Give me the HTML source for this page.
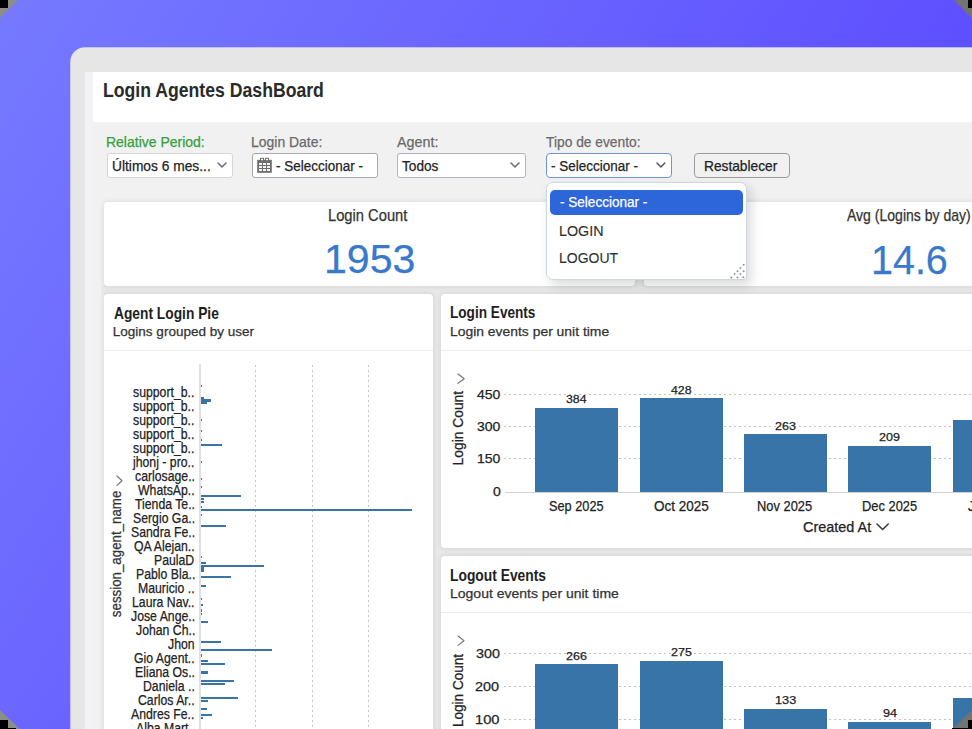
<!DOCTYPE html>
<html><head><meta charset="utf-8"><style>
html,body{margin:0;padding:0;width:972px;height:729px;overflow:hidden;background:#000}
body{position:relative;font-family:"Liberation Sans",sans-serif}
.b{position:absolute}
.t{position:absolute;line-height:1;white-space:nowrap;transform-origin:0 0;-webkit-text-stroke:0.25px currentColor}
#wrap{position:absolute;left:0;top:0;width:972px;height:729px;overflow:hidden}
</style></head><body><div id="wrap">
<div class="b" style="left:0;top:0;width:972px;height:729px;background:linear-gradient(122deg,rgb(118,122,255),rgb(84,61,255))"></div>
<div class="b" style="left:71px;top:48px;width:1029px;height:852px;background:#e6e6e6;border-radius:14px;box-shadow:0 0 0 0.8px rgba(240,240,255,0.85)"></div>
<div class="b" style="left:85px;top:72px;width:1015px;height:828px;background:#f2f2f4"></div>
<div class="b" style="left:93px;top:72px;width:1007px;height:50px;background:#ffffff"></div>
<div class="b" style="left:92.5px;top:122px;width:1.5px;height:778px;background:#f9f9fb"></div>
<div class="b" style="left:93px;top:122px;width:1007px;height:778px;background:#f1f1f1"></div>
<div class="t" style="left:102.82px;top:79px;font-size:20.35px;line-height:22px;color:#2a2a2a;transform:scaleX(0.8673);font-weight:bold;-webkit-text-stroke:0">Login Agentes DashBoard</div>
<div class="t" style="left:106.45px;top:133.7px;font-size:14.68px;line-height:16px;color:#34a03c;transform:scaleX(0.9526)">Relative Period:</div>
<div class="t" style="left:251.46px;top:133.7px;font-size:14.68px;line-height:16px;color:#6a6a6a;transform:scaleX(0.9511)">Login Date:</div>
<div class="t" style="left:397.37px;top:133.7px;font-size:14.68px;line-height:16px;color:#6a6a6a;transform:scaleX(0.9763)">Agent:</div>
<div class="t" style="left:545.9px;top:133.7px;font-size:14.68px;line-height:16px;color:#6a6a6a;transform:scaleX(0.9394)">Tipo de evento:</div>
<div class="b" style="left:107px;top:153px;width:125.5px;height:24.5px;background:#fff;border:1px solid #d6d6d6;border-radius:3px;box-sizing:border-box"></div>
<div class="b" style="left:252px;top:153px;width:126px;height:24.5px;background:#fff;border:1px solid #a8a8b0;border-radius:3px;box-sizing:border-box"></div>
<div class="b" style="left:397px;top:153px;width:128.5px;height:24.5px;background:#fff;border:1px solid #b4b4be;border-radius:3px;box-sizing:border-box"></div>
<div class="b" style="left:545.5px;top:152.8px;width:126.3px;height:25px;background:#fff;border:1.5px solid #7194dc;border-radius:4px;box-sizing:border-box"></div>
<div class="b" style="left:694px;top:153.3px;width:95.5px;height:24.5px;background:#f1f1f1;border:1px solid #9c9c9c;border-radius:4px;box-sizing:border-box"></div>
<div class="t" style="left:111.94px;top:157px;font-size:15.26px;line-height:17px;color:#222;transform:scaleX(0.9033)">Últimos 6 mes...</div>
<div class="t" style="left:276.4px;top:157px;font-size:15.26px;line-height:17px;color:#222;transform:scaleX(0.8862)">- Seleccionar -</div>
<div class="t" style="left:402.4px;top:157px;font-size:15.26px;line-height:17px;color:#222;transform:scaleX(0.8937)">Todos</div>
<div class="t" style="left:550.51px;top:157px;font-size:15.26px;line-height:17px;color:#222;transform:scaleX(0.8851)">- Seleccionar -</div>
<div class="t" style="left:703.87px;top:157.5px;font-size:14.53px;line-height:16px;color:#222;transform:scaleX(0.9459)">Restablecer</div>
<svg class="b" style="left:217.6px;top:163.3px;overflow:visible" width="8" height="4"><polyline points="0,0 4,4 8,0" fill="none" stroke="#6f6f6f" stroke-width="1.6" stroke-linecap="round" stroke-linejoin="round"/></svg>
<svg class="b" style="left:511px;top:163.3px;overflow:visible" width="8" height="4"><polyline points="0,0 4,4 8,0" fill="none" stroke="#6f6f6f" stroke-width="1.6" stroke-linecap="round" stroke-linejoin="round"/></svg>
<svg class="b" style="left:656.5px;top:163.3px;overflow:visible" width="7.8" height="4"><polyline points="0,0 3.9,4 7.8,0" fill="none" stroke="#5a5a5a" stroke-width="1.6" stroke-linecap="round" stroke-linejoin="round"/></svg>
<svg class="b" style="left:257px;top:157px" width="15" height="17" viewBox="0 0 15 17"><rect x="0.2" y="2.8" width="14.6" height="13" fill="#6d6d6d"/><rect x="3" y="0.8" width="4" height="3" fill="#6d6d6d"/><rect x="8" y="0.8" width="4" height="3" fill="#6d6d6d"/><rect x="4" y="1.8" width="2" height="1.4" fill="#fff"/><rect x="9" y="1.8" width="2" height="1.4" fill="#fff"/><rect x="2" y="6" width="3" height="2" fill="#f4f4f4"/><rect x="6" y="6" width="3" height="2" fill="#f4f4f4"/><rect x="10" y="6" width="3" height="2" fill="#f4f4f4"/><rect x="2" y="9" width="3" height="2" fill="#f4f4f4"/><rect x="6" y="9" width="3" height="2" fill="#f4f4f4"/><rect x="10" y="9" width="3" height="2" fill="#f4f4f4"/><rect x="2" y="12" width="3" height="2" fill="#f4f4f4"/><rect x="6" y="12" width="3" height="2" fill="#f4f4f4"/><rect x="10" y="12" width="3" height="2" fill="#f4f4f4"/></svg>
<div class="b" style="left:101px;top:285px;width:999px;height:10px;background:#e9e9e9"></div>
<div class="b" style="left:633px;top:201px;width:12px;height:86px;background:#e9e9e9"></div>
<div class="b" style="left:431px;top:293px;width:11px;height:607px;background:#e9e9e9"></div>
<div class="b" style="left:440px;top:547px;width:660px;height:10px;background:#e9e9e9"></div>
<div class="b" style="left:104px;top:202px;width:530.5px;height:84px;background:#fff;border-radius:4px;box-shadow:0 0 5px 1px rgba(0,0,0,0.085)"></div>
<div class="b" style="left:643.5px;top:202px;width:531.5px;height:84px;background:#fff;border-radius:4px;box-shadow:0 0 5px 1px rgba(0,0,0,0.085)"></div>
<div class="t" style="left:328.49px;top:206.9px;font-size:15.7px;line-height:17px;color:#333;transform:scaleX(0.9380)">Login Count</div>
<div class="t" style="left:323.68px;top:236.3px;font-size:40.54px;line-height:46px;color:#3979cb;transform:scaleX(1.0140)">1953</div>
<div class="t" style="left:847.37px;top:207px;font-size:15.7px;line-height:17px;color:#333;transform:scaleX(0.8942)">Avg (Logins by day)</div>
<div class="t" style="left:870.6px;top:236.5px;font-size:40.54px;line-height:46px;color:#3979cb;transform:scaleX(0.9739)">14.6</div>
<div class="b" style="left:104px;top:294px;width:328.5px;height:606px;background:#fff;border-radius:4px;box-shadow:0 0 5px 1px rgba(0,0,0,0.085)"></div>
<div class="b" style="left:441px;top:294px;width:659px;height:254px;background:#fff;border-radius:4px;box-shadow:0 0 5px 1px rgba(0,0,0,0.085)"></div>
<div class="b" style="left:441px;top:556px;width:659px;height:344px;background:#fff;border-radius:4px;box-shadow:0 0 5px 1px rgba(0,0,0,0.085)"></div>
<div class="b" style="left:104px;top:349.5px;width:328.5px;height:1px;background:#ececec"></div>
<div class="b" style="left:441px;top:349.5px;width:659px;height:1px;background:#ececec"></div>
<div class="b" style="left:441px;top:611.5px;width:659px;height:1px;background:#ececec"></div>
<div class="t" style="left:113.56px;top:304.9px;font-size:15.7px;line-height:17px;color:#1e1e1e;transform:scaleX(0.8781);font-weight:bold;-webkit-text-stroke:0">Agent Login Pie</div>
<div class="t" style="left:112.79px;top:323.9px;font-size:13.52px;line-height:15px;color:#333">Logins grouped by user</div>
<div class="t" style="left:450.09px;top:304.3px;font-size:15.7px;line-height:17px;color:#1e1e1e;transform:scaleX(0.8673);font-weight:bold;-webkit-text-stroke:0">Login Events</div>
<div class="t" style="left:449.86px;top:324px;font-size:13.52px;line-height:15px;color:#333;transform:scaleX(1.0282)">Login events per unit time</div>
<div class="t" style="left:449.87px;top:567px;font-size:15.7px;line-height:17px;color:#1e1e1e;transform:scaleX(0.8816);font-weight:bold;-webkit-text-stroke:0">Logout Events</div>
<div class="t" style="left:449.65px;top:586px;font-size:13.52px;line-height:15px;color:#333;transform:scaleX(1.0356)">Logout events per unit time</div>
<svg class="b" style="left:254px;top:365px" width="3" height="370"><line x1="1.5" y1="0" x2="1.5" y2="370" stroke="#c4c4c4" stroke-width="1" stroke-dasharray="2 3"/></svg>
<svg class="b" style="left:310.5px;top:365px" width="3" height="370"><line x1="1.5" y1="0" x2="1.5" y2="370" stroke="#c4c4c4" stroke-width="1" stroke-dasharray="2 3"/></svg>
<svg class="b" style="left:367px;top:365px" width="3" height="370"><line x1="1.5" y1="0" x2="1.5" y2="370" stroke="#c4c4c4" stroke-width="1" stroke-dasharray="2 3"/></svg>
<div class="b" style="left:199.4px;top:364.3px;width:1.4px;height:535.7px;background:#e0e0e0"></div>
<div class="t" style="left:133.47px;top:383.6px;font-size:13.95px;line-height:16px;color:#222;transform:scaleX(0.8800)">support_b..</div>
<div class="t" style="left:133.47px;top:397.6px;font-size:13.95px;line-height:16px;color:#222;transform:scaleX(0.8800)">support_b..</div>
<div class="t" style="left:133.47px;top:411.6px;font-size:13.95px;line-height:16px;color:#222;transform:scaleX(0.8800)">support_b..</div>
<div class="t" style="left:133.47px;top:425.6px;font-size:13.95px;line-height:16px;color:#222;transform:scaleX(0.8800)">support_b..</div>
<div class="t" style="left:133.47px;top:439.6px;font-size:13.95px;line-height:16px;color:#222;transform:scaleX(0.8800)">support_b..</div>
<div class="t" style="left:133.49px;top:453.6px;font-size:13.95px;line-height:16px;color:#222;transform:scaleX(0.8800)">jhonj - pro..</div>
<div class="t" style="left:134.85px;top:467.6px;font-size:13.95px;line-height:16px;color:#222;transform:scaleX(0.8800)">carlosage..</div>
<div class="t" style="left:138.27px;top:481.6px;font-size:13.95px;line-height:16px;color:#222;transform:scaleX(0.8800)">WhatsAp..</div>
<div class="t" style="left:134.85px;top:495.6px;font-size:13.95px;line-height:16px;color:#222;transform:scaleX(0.8800)">Tienda Te..</div>
<div class="t" style="left:132.81px;top:509.6px;font-size:13.95px;line-height:16px;color:#222;transform:scaleX(0.8800)">Sergio Ga..</div>
<div class="t" style="left:130.76px;top:523.6px;font-size:13.95px;line-height:16px;color:#222;transform:scaleX(0.8800)">Sandra Fe..</div>
<div class="t" style="left:134.16px;top:537.6px;font-size:13.95px;line-height:16px;color:#222;transform:scaleX(0.8800)">QA Alejan..</div>
<div class="t" style="left:154.11px;top:551.6px;font-size:13.95px;line-height:16px;color:#222;transform:scaleX(0.8800)">PaulaD</div>
<div class="t" style="left:135.52px;top:565.6px;font-size:13.95px;line-height:16px;color:#222;transform:scaleX(0.8800)">Pablo Bla..</div>
<div class="t" style="left:138.27px;top:579.6px;font-size:13.95px;line-height:16px;color:#222;transform:scaleX(0.8800)">Mauricio ..</div>
<div class="t" style="left:132.36px;top:593.6px;font-size:13.95px;line-height:16px;color:#222;transform:scaleX(0.8800)">Laura Nav..</div>
<div class="t" style="left:130.75px;top:607.6px;font-size:13.95px;line-height:16px;color:#222;transform:scaleX(0.8800)">Jose Ange..</div>
<div class="t" style="left:135.52px;top:621.6px;font-size:13.95px;line-height:16px;color:#222;transform:scaleX(0.8800)">Johan Ch..</div>
<div class="t" style="left:167.98px;top:635.6px;font-size:13.95px;line-height:16px;color:#222;transform:scaleX(0.8800)">Jhon</div>
<div class="t" style="left:134.16px;top:649.6px;font-size:13.95px;line-height:16px;color:#222;transform:scaleX(0.8800)">Gio Agent..</div>
<div class="t" style="left:134.86px;top:663.6px;font-size:13.95px;line-height:16px;color:#222;transform:scaleX(0.8800)">Eliana Os..</div>
<div class="t" style="left:143.04px;top:677.6px;font-size:13.95px;line-height:16px;color:#222;transform:scaleX(0.8800)">Daniela ..</div>
<div class="t" style="left:138.27px;top:691.6px;font-size:13.95px;line-height:16px;color:#222;transform:scaleX(0.8800)">Carlos Ar..</div>
<div class="t" style="left:131.45px;top:705.6px;font-size:13.95px;line-height:16px;color:#222;transform:scaleX(0.8800)">Andres Fe..</div>
<div class="t" style="left:135.55px;top:719.6px;font-size:13.95px;line-height:16px;color:#222;transform:scaleX(0.8800)">Alba Mart..</div>
<div class="b" style="left:200.5px;top:385.3px;width:1.5px;height:2.2px;background:#3874a8"></div>
<div class="b" style="left:200.5px;top:396.5px;width:3px;height:2.2px;background:#3874a8"></div>
<div class="b" style="left:200.5px;top:399.4px;width:10px;height:2.2px;background:#3874a8"></div>
<div class="b" style="left:200.5px;top:402.2px;width:6.1px;height:2.2px;background:#3874a8"></div>
<div class="b" style="left:200.5px;top:418.8px;width:1.2px;height:2.2px;background:#3874a8"></div>
<div class="b" style="left:200.5px;top:429.9px;width:1px;height:2.2px;background:#3874a8"></div>
<div class="b" style="left:200.5px;top:438.6px;width:1px;height:2.2px;background:#3874a8"></div>
<div class="b" style="left:200.5px;top:444.1px;width:21px;height:2.2px;background:#3874a8"></div>
<div class="b" style="left:200.5px;top:460.5px;width:0.3px;height:2.2px;background:#3874a8"></div>
<div class="b" style="left:200.5px;top:477.9px;width:0.3px;height:2.2px;background:#3874a8"></div>
<div class="b" style="left:200.5px;top:486.3px;width:1px;height:2.2px;background:#3874a8"></div>
<div class="b" style="left:200.5px;top:494.7px;width:40.2px;height:2.2px;background:#3874a8"></div>
<div class="b" style="left:200.5px;top:497.5px;width:3.5px;height:2.2px;background:#3874a8"></div>
<div class="b" style="left:200.5px;top:500.6px;width:3.5px;height:2.2px;background:#3874a8"></div>
<div class="b" style="left:200.5px;top:505.6px;width:1.5px;height:2.2px;background:#3874a8"></div>
<div class="b" style="left:200.5px;top:508.8px;width:211.8px;height:2.2px;background:#3874a8"></div>
<div class="b" style="left:200.5px;top:514.2px;width:0.5px;height:2.2px;background:#3874a8"></div>
<div class="b" style="left:200.5px;top:525.3px;width:25.4px;height:2.2px;background:#3874a8"></div>
<div class="b" style="left:200.5px;top:556.3px;width:1.5px;height:2.2px;background:#3874a8"></div>
<div class="b" style="left:200.5px;top:561.9px;width:5.4px;height:2.2px;background:#3874a8"></div>
<div class="b" style="left:200.5px;top:564.7px;width:63px;height:2.2px;background:#3874a8"></div>
<div class="b" style="left:200.5px;top:567.4px;width:3px;height:2.2px;background:#3874a8"></div>
<div class="b" style="left:200.5px;top:570.3px;width:3px;height:2.2px;background:#3874a8"></div>
<div class="b" style="left:200.5px;top:576.1px;width:30.3px;height:2.2px;background:#3874a8"></div>
<div class="b" style="left:200.5px;top:584.5px;width:5.7px;height:2.2px;background:#3874a8"></div>
<div class="b" style="left:200.5px;top:598.3px;width:0.5px;height:2.2px;background:#3874a8"></div>
<div class="b" style="left:200.5px;top:604.2px;width:2.5px;height:2.2px;background:#3874a8"></div>
<div class="b" style="left:200.5px;top:609.4px;width:1.5px;height:2.2px;background:#3874a8"></div>
<div class="b" style="left:200.5px;top:612.6px;width:1.5px;height:2.2px;background:#3874a8"></div>
<div class="b" style="left:200.5px;top:620.9px;width:7.5px;height:2.2px;background:#3874a8"></div>
<div class="b" style="left:200.5px;top:640.7px;width:20.3px;height:2.2px;background:#3874a8"></div>
<div class="b" style="left:200.5px;top:649.3px;width:71.3px;height:2.2px;background:#3874a8"></div>
<div class="b" style="left:200.5px;top:654.4px;width:1px;height:2.2px;background:#3874a8"></div>
<div class="b" style="left:200.5px;top:660.1px;width:7.7px;height:2.2px;background:#3874a8"></div>
<div class="b" style="left:200.5px;top:662.9px;width:24.1px;height:2.2px;background:#3874a8"></div>
<div class="b" style="left:200.5px;top:671.4px;width:7.7px;height:2.2px;background:#3874a8"></div>
<div class="b" style="left:200.5px;top:680px;width:33.4px;height:2.2px;background:#3874a8"></div>
<div class="b" style="left:200.5px;top:682.8px;width:24.7px;height:2.2px;background:#3874a8"></div>
<div class="b" style="left:200.5px;top:696.8px;width:37.5px;height:2.2px;background:#3874a8"></div>
<div class="b" style="left:200.5px;top:699.6px;width:7.7px;height:2.2px;background:#3874a8"></div>
<div class="b" style="left:200.5px;top:708.1px;width:6.9px;height:2.2px;background:#3874a8"></div>
<div class="b" style="left:200.5px;top:713.5px;width:11.3px;height:2.2px;background:#3874a8"></div>
<div class="b" style="left:200.5px;top:716.5px;width:2px;height:2.2px;background:#3874a8"></div>
<svg class="b" style="left:117px;top:475.6px;overflow:visible" width="5" height="9.4"><polyline points="0,0 5,4.7 0,9.4" fill="none" stroke="#777" stroke-width="1.2" stroke-linecap="round" stroke-linejoin="round"/></svg>
<div class="t" style="left:0;top:0;font-size:14.02px;line-height:16px;color:#333;transform:translate(108px,617.17px) rotate(-90deg) scaleX(0.9491)">session_agent_name</div>
<svg class="b" style="left:504px;top:393px" width="470" height="2"><line x1="0" y1="1.5" x2="470" y2="1.5" stroke="#c2c2c2" stroke-width="1" stroke-dasharray="2 3"/></svg>
<svg class="b" style="left:504px;top:425px" width="470" height="2"><line x1="0" y1="1.5" x2="470" y2="1.5" stroke="#c2c2c2" stroke-width="1" stroke-dasharray="2 3"/></svg>
<svg class="b" style="left:504px;top:457px" width="470" height="2"><line x1="0" y1="1.5" x2="470" y2="1.5" stroke="#c2c2c2" stroke-width="1" stroke-dasharray="2 3"/></svg>
<div class="b" style="left:504.7px;top:491.6px;width:595.3px;height:1px;background:#d2d2d2"></div>
<div class="b" style="left:535px;top:407.7px;width:83.3px;height:84.3px;background:#3874a8"></div>
<div class="t" style="left:566.33px;top:392.2px;font-size:11.75px;line-height:13px;color:#222;transform:scaleX(1.0474)">384</div>
<div class="b" style="left:639.5px;top:398.1px;width:83.3px;height:93.9px;background:#3874a8"></div>
<div class="t" style="left:671.02px;top:382.6px;font-size:11.75px;line-height:13px;color:#222;transform:scaleX(1.0468)">428</div>
<div class="b" style="left:743.7px;top:434px;width:83.3px;height:58px;background:#3874a8"></div>
<div class="t" style="left:774.87px;top:418.5px;font-size:11.75px;line-height:13px;color:#222;transform:scaleX(1.0654)">263</div>
<div class="b" style="left:848.2px;top:445.6px;width:83.3px;height:46.4px;background:#3874a8"></div>
<div class="t" style="left:879.37px;top:430.1px;font-size:11.75px;line-height:13px;color:#222;transform:scaleX(1.0674)">209</div>
<div class="b" style="left:953px;top:420.3px;width:83.3px;height:71.7px;background:#3874a8"></div>
<div class="t" style="left:477px;top:387px;font-size:13.18px;line-height:15px;color:#222;transform:scaleX(1.0619)">450</div>
<div class="t" style="left:477px;top:419px;font-size:13.18px;line-height:15px;color:#222;transform:scaleX(1.0619)">300</div>
<div class="t" style="left:477px;top:451.2px;font-size:13.18px;line-height:15px;color:#222;transform:scaleX(1.0619)">150</div>
<div class="t" style="left:492.56px;top:484.3px;font-size:13.18px;line-height:15px;color:#222;transform:scaleX(1.0619)">0</div>
<div class="t" style="left:549.26px;top:497.6px;font-size:14.53px;line-height:16px;color:#222;transform:scaleX(0.8793)">Sep 2025</div>
<div class="t" style="left:653.72px;top:497.6px;font-size:14.53px;line-height:16px;color:#222;transform:scaleX(0.9291)">Oct 2025</div>
<div class="t" style="left:757.49px;top:497.6px;font-size:14.53px;line-height:16px;color:#222;transform:scaleX(0.8871)">Nov 2025</div>
<div class="t" style="left:861.99px;top:497.6px;font-size:14.53px;line-height:16px;color:#222;transform:scaleX(0.8871)">Dec 2025</div>
<div class="t" style="left:967.64px;top:497.6px;font-size:14.53px;line-height:16px;color:#222;transform:scaleX(0.9094)">Jan 2026</div>
<div class="t" style="left:803.46px;top:518.9px;font-size:13.95px;line-height:16px;color:#222;transform:scaleX(1.0365)">Created At</div>
<svg class="b" style="left:877px;top:524.3px;overflow:visible" width="11.2" height="5.5"><polyline points="0,0 5.6,5.5 11.2,0" fill="none" stroke="#3a3a3a" stroke-width="1.6" stroke-linecap="round" stroke-linejoin="round"/></svg>
<svg class="b" style="left:458px;top:374px;overflow:visible" width="6.2" height="9.3"><polyline points="0,0 6.2,4.65 0,9.3" fill="none" stroke="#777" stroke-width="1.2" stroke-linecap="round" stroke-linejoin="round"/></svg>
<div class="t" style="left:0;top:0;font-size:14.53px;line-height:16px;color:#222;transform:translate(450px,465.43px) rotate(-90deg) scaleX(0.9521)">Login Count</div>
<svg class="b" style="left:504px;top:652px" width="470" height="2"><line x1="0" y1="1.5" x2="470" y2="1.5" stroke="#c2c2c2" stroke-width="1" stroke-dasharray="2 3"/></svg>
<svg class="b" style="left:504px;top:685px" width="470" height="2"><line x1="0" y1="1.5" x2="470" y2="1.5" stroke="#c2c2c2" stroke-width="1" stroke-dasharray="2 3"/></svg>
<svg class="b" style="left:504px;top:718px" width="470" height="2"><line x1="0" y1="1.5" x2="470" y2="1.5" stroke="#c2c2c2" stroke-width="1" stroke-dasharray="2 3"/></svg>
<div class="b" style="left:535px;top:664px;width:83.3px;height:236px;background:#3874a8"></div>
<div class="t" style="left:566.17px;top:648.5px;font-size:11.75px;line-height:13px;color:#222;transform:scaleX(1.0654)">266</div>
<div class="b" style="left:639.5px;top:660.5px;width:83.3px;height:239.5px;background:#3874a8"></div>
<div class="t" style="left:670.67px;top:645px;font-size:11.75px;line-height:13px;color:#222;transform:scaleX(1.0640)">275</div>
<div class="b" style="left:743.7px;top:708.7px;width:83.3px;height:191.3px;background:#3874a8"></div>
<div class="t" style="left:774.53px;top:693.2px;font-size:11.75px;line-height:13px;color:#222;transform:scaleX(1.0833)">133</div>
<div class="b" style="left:848.2px;top:721.9px;width:83.3px;height:178.1px;background:#3874a8"></div>
<div class="t" style="left:882.69px;top:706.4px;font-size:11.75px;line-height:13px;color:#222;transform:scaleX(1.0791)">94</div>
<div class="b" style="left:953px;top:698.1px;width:83.3px;height:201.9px;background:#3874a8"></div>
<div class="t" style="left:475.66px;top:645.6px;font-size:13.18px;line-height:15px;color:#222;transform:scaleX(1.0873)">300</div>
<div class="t" style="left:475.48px;top:678.8px;font-size:13.18px;line-height:15px;color:#222;transform:scaleX(1.0955)">200</div>
<div class="t" style="left:475.08px;top:712px;font-size:13.18px;line-height:15px;color:#222;transform:scaleX(1.1139)">100</div>
<svg class="b" style="left:458.3px;top:635.6px;overflow:visible" width="6" height="9.4"><polyline points="0,0 6,4.7 0,9.4" fill="none" stroke="#777" stroke-width="1.2" stroke-linecap="round" stroke-linejoin="round"/></svg>
<div class="t" style="left:0;top:0;font-size:14.53px;line-height:16px;color:#222;transform:translate(450.3px,727.11px) rotate(-90deg) scaleX(0.9352)">Login Count</div>
<div class="b" style="left:545.7px;top:181.5px;width:200.9px;height:98.1px;background:#fff;border:1px solid #cfd6e6;border-radius:7px 7px 3px 7px;box-sizing:border-box;box-shadow:4px 5px 12px rgba(0,0,0,0.15)"></div>
<div class="b" style="left:549.6px;top:190px;width:193.2px;height:24.8px;background:#2d66d8;border-radius:5px"></div>
<div class="t" style="left:559.8px;top:192.7px;font-size:15.26px;line-height:17px;color:#fff;transform:scaleX(0.8882)">- Seleccionar -</div>
<div class="t" style="left:559.42px;top:221.7px;font-size:15.26px;line-height:17px;color:#2e2e2e;transform:scaleX(0.9399);-webkit-text-stroke:0.1px currentColor">LOGIN</div>
<div class="t" style="left:559.45px;top:249.3px;font-size:15.26px;line-height:17px;color:#2e2e2e;transform:scaleX(0.9181);-webkit-text-stroke:0.1px currentColor">LOGOUT</div>
<svg class="b" style="left:730px;top:264px" width="15" height="15"><rect x="0.4" y="12.5" width="1.8" height="1.8" fill="#9a9a9a" transform="rotate(45 1.3 13.4)"/><rect x="3.7" y="9.2" width="1.8" height="1.8" fill="#9a9a9a" transform="rotate(45 4.6 10.1)"/><rect x="6.6" y="6.3" width="1.8" height="1.8" fill="#9a9a9a" transform="rotate(45 7.5 7.2)"/><rect x="9.5" y="3.1" width="1.8" height="1.8" fill="#9a9a9a" transform="rotate(45 10.4 4.0)"/><rect x="12.8" y="-0.2" width="1.8" height="1.8" fill="#9a9a9a" transform="rotate(45 13.7 0.7)"/><rect x="6.6" y="12.5" width="1.8" height="1.8" fill="#9a9a9a" transform="rotate(45 7.5 13.4)"/><rect x="9.5" y="9.2" width="1.8" height="1.8" fill="#9a9a9a" transform="rotate(45 10.4 10.1)"/><rect x="12.8" y="6.3" width="1.8" height="1.8" fill="#9a9a9a" transform="rotate(45 13.7 7.2)"/><rect x="12.4" y="12.4" width="1.8" height="1.8" fill="#9a9a9a" transform="rotate(45 13.3 13.3)"/></svg>
<svg class="b" style="left:0;top:0" width="972" height="729"><polygon points="0,0 18,0 0,18" fill="#8c8c88"/><rect x="0" y="0" width="8" height="8" fill="#000"/><polygon points="972,0 954,0 972,18" fill="#737370"/><rect x="968" y="0" width="4" height="8" fill="#000"/><polygon points="0,729 0,710 20,729" fill="#8c8c88"/><rect x="0" y="720" width="8" height="9" fill="#000"/><rect x="8" y="728" width="8" height="1" fill="#000"/><polygon points="972,729 972,710 953,729" fill="#737370"/><rect x="968" y="720" width="4" height="9" fill="#000"/><rect x="952" y="728" width="16" height="1" fill="#000"/></svg>
</div></body></html>
